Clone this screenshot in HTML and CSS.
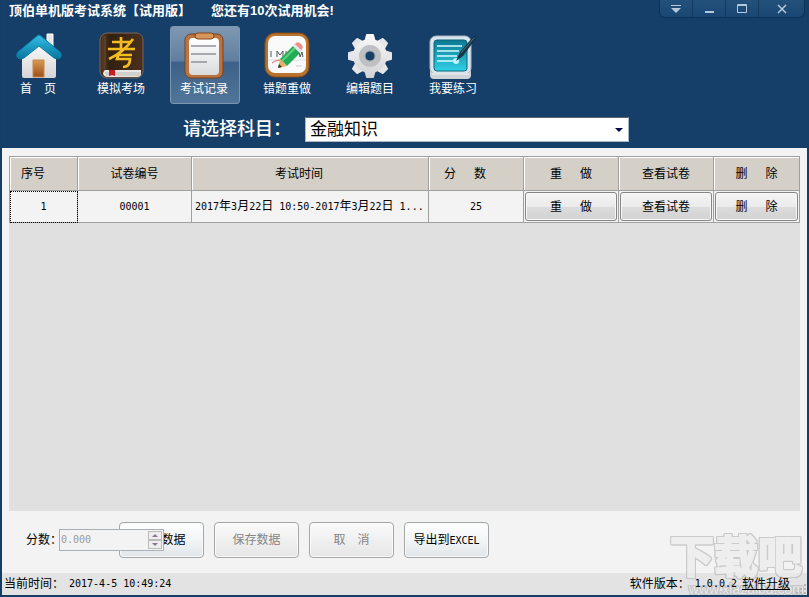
FILE: index.html
```html
<!DOCTYPE html>
<html lang="zh-CN">
<head>
    <meta charset="UTF-8">
    <meta name="viewport" content="width=device-width, initial-scale=1.0">
    <title>顶伯单机版考试系统</title>
    <link rel="stylesheet" href="styles.css">
</head>
<body>
    <header class="header">
        <div class="titlebar">
            <h1 class="title">顶伯单机版考试系统【试用版】</h1>
            <span class="trial">您还有10次试用机会!</span>
            <div class="window-buttons">
                <button class="window-button" aria-label="菜单">
                    <svg width="10" height="10" viewBox="0 0 10 10"><path d="M0 1.5h10" stroke="#b5c9dc"/><path d="M0 4h10L5 9z" fill="#b5c9dc"/></svg>
                </button>
                <button class="window-button" aria-label="最小化">
                    <svg width="10" height="10" viewBox="0 0 10 10"><path d="M1 7h9v2H1z" fill="#b5c9dc"/></svg>
                </button>
                <button class="window-button" aria-label="最大化">
                    <svg width="10" height="10" viewBox="0 0 10 10"><path d="M.5 .5h9v8h-9zM0 1.5h10" fill="none" stroke="#b5c9dc"/></svg>
                </button>
                <button class="window-button close" aria-label="关闭">
                    <svg width="10" height="10" viewBox="0 0 10 10"><path d="M1 1l8 8M9 1L1 9" stroke="#b5c9dc" stroke-width="1.5"/></svg>
                </button>
            </div>
        </div>

        <nav class="toolbar">
            <button class="tool">
                <svg class="tool-icon" viewBox="0 0 48 48">
                    <defs>
                        <linearGradient id="roof" x2="0" y2="1"><stop stop-color="#35bde8"/><stop offset="1" stop-color="#08779f"/></linearGradient>
                        <linearGradient id="wall" x2="0" y2="1"><stop stop-color="#fff"/><stop offset="1" stop-color="#d5d5d7"/></linearGradient>
                        <linearGradient id="door" x2="0" y2="1"><stop stop-color="#d99a52"/><stop offset="1" stop-color="#9c4f18"/></linearGradient>
                    </defs>
                    <path d="M33 2h6v16h-6z" fill="#e5e6e8" stroke="#fff"/>
                    <path d="M8 22L25 7l17 15v22q0 2-2 2H10q-2 0-2-2z" fill="url(#wall)"/>
                    <path d="M23 4Q25 2 27 4L46 20q2 2 1 5-2 3-7 1L25 14 10 26q-5 2-7-1-1-3 1-5z" fill="url(#roof)" stroke="#087da5"/>
                    <path d="M19 28h11v17H19z" fill="url(#door)" stroke="#c8864b"/>
                </svg>
                <span>首　页</span>
            </button>
            <button class="tool">
                <svg class="tool-icon" viewBox="0 0 48 48">
                    <defs><linearGradient id="cover"><stop stop-color="#5a3b24"/><stop offset=".2" stop-color="#322010"/><stop offset="1" stop-color="#49301c"/></linearGradient></defs>
                    <rect x="3" y="1" width="43" height="45" rx="7" fill="#4b2d1d" stroke="#77675c"/>
                    <path d="M7 38h37v5q-1 2-4 2H11q-5 0-5-4z" fill="#e9e7e2"/>
                    <path d="M8 41h36M9 43h34" stroke="#aaa79f" stroke-width=".7"/>
                    <path d="M5 38V7q0-5 5-5h30q5 0 5 5v29q0 2-3 2H9q-3 0-3 4z" fill="url(#cover)"/>
                    <path d="M8 4v33" stroke="#6d4932"/>
                    <path d="M12 38h6v6l-3-1-3 1z" fill="#c51f22"/>
                    <path d="M15 10h18M24 5v12M11 17h27M36 7Q27 20 12 27M22 21l-2 6h13q0 8-7 8M22 23h13" fill="none" stroke="#f5bd20" stroke-width="2.7"/>
                </svg>
                <span>模拟考场</span>
            </button>
            <button class="tool active">
                <svg class="tool-icon" viewBox="0 0 48 48">
                    <defs><linearGradient id="paper" x2="0" y2="1"><stop stop-color="#fff"/><stop offset="1" stop-color="#dadbdd"/></linearGradient></defs>
                    <rect x="5" y="2" width="38" height="44" rx="6" fill="#b87442" stroke="#7d401b"/>
                    <rect x="9" y="6" width="30" height="37" rx="4" fill="url(#paper)"/>
                    <rect x="15" y="1" width="19" height="6" rx="3" fill="#d89558" stroke="#824419"/>
                    <path d="M11 14h25M11 22h25M11 30h16" stroke="#909296" stroke-width="1.7"/>
                </svg>
                <span>考试记录</span>
            </button>
            <button class="tool">
                <svg class="tool-icon" viewBox="0 0 48 48">
                    <rect x="2" y="1" width="44" height="44" rx="10" fill="#b8732f" stroke="#8a4c18"/>
                    <rect x="5" y="4" width="38" height="37" rx="7" fill="#fafafa"/>
                    <path d="M8 19v6M14 25v-6l3 4 3-4v6M23 19v6M36 19l1 6 2-5 1 5" fill="none" stroke="#555"/>
                    <path d="M5 28h38" stroke="#cfcfcf" stroke-width=".6"/>
                    <path d="M9 31q5-4 13-3" fill="none" stroke="#e06057"/>
                    <path d="M33 34h6" stroke="#ccc"/>
                    <path d="M17 27L30 14l7 7-13 13z" fill="#20ad56"/>
                    <path d="M19 29L32 16" stroke="#65ce83" stroke-width="2"/>
                    <path d="M31 13l2-2q2-2 5 1t1 5l-2 3z" fill="#ef8d86"/>
                    <path d="M30 14l2-2 7 7-2 2z" fill="#e5e6e9"/>
                    <path d="M17 27l7 7-9 2z" fill="#e7b16b"/><path d="M16 32l3 3-4 1z" fill="#333"/>
                </svg>
                <span>错题重做</span>
            </button>
            <button class="tool">
                <svg class="tool-icon" viewBox="0 0 48 48">
                    <defs>
                        <linearGradient id="gear" gradientUnits="userSpaceOnUse" x1="0" y1="2" x2="0" y2="46"><stop stop-color="#fafafa"/><stop offset="1" stop-color="#d2d2d4"/></linearGradient>
                        <path id="teeth" d="M18 10l2-7q0-1 1-1h6q1 0 1 1l2 7v28l-2 7q0 1-1 1h-6q-1 0-1-1l-2-7z"/>
                    </defs>
                    <g fill="#e6e6e8">
                        <use href="#teeth" fill="url(#gear)"/>
                        <use href="#teeth" transform="rotate(45 24 24)"/>
                        <use href="#teeth" transform="rotate(90 24 24)"/>
                        <use href="#teeth" transform="rotate(135 24 24)"/>
                    </g>
                    <circle cx="24" cy="24" r="17" fill="url(#gear)"/>
                    <circle cx="24" cy="24" r="11" fill="#bfc0c4"/>
                    <circle cx="24" cy="24" r="5" fill="#154069" stroke="#9da2aa"/>
                </svg>
                <span>编辑题目</span>
            </button>
            <button class="tool">
                <svg class="tool-icon" viewBox="0 0 48 48">
                    <defs><linearGradient id="screen" x2="0" y2="1"><stop stop-color="#0b7992"/><stop offset="1" stop-color="#2fd0e6"/></linearGradient></defs>
                    <path d="M1 32v11q0 4 4 4h33q4 0 4-4V32z" fill="#cfd3d9"/>
                    <rect x="1" y="4" width="41" height="38" rx="6" fill="#dae4eb" stroke="#a5b6c4"/>
                    <path d="M3 42h37" stroke="#fff"/>
                    <rect x="5" y="8" width="33" height="31" rx="3" fill="url(#screen)" stroke="#06677e"/>
                    <path d="M8 14h25M8 19h22M8 24h20M8 29h17" stroke="#d8fbff" stroke-width="1.6"/>
                    <circle cx="27" cy="29" r="3" fill="#b9f7ff"/>
                    <path d="M47 3q1 2-2 6L34 24l-7 5 4-9L43 6z" fill="#173447"/><path d="M32 21L45 6" stroke="#577386"/>
                </svg>
                <span>我要练习</span>
            </button>
        </nav>

        <div class="subject">
            <label class="subject-label" for="subject">请选择科目：</label>
            <div class="select-box">
                <select id="subject" class="subject-select">
                    <option>金融知识</option>
                </select>
                <svg class="select-arrow" width="8" height="4" viewBox="0 0 8 4"><path d="M0 0h8L4 4z" fill="#00004c"/></svg>
            </div>
        </div>
    </header>

    <main class="content">
        <div class="grid">
            <table class="records">
                <colgroup>
                    <col class="col-index">
                    <col class="col-code">
                    <col>
                    <col class="col-action">
                    <col class="col-action">
                    <col class="col-action">
                    <col class="col-delete">
                </colgroup>
                <thead>
                    <tr>
                        <th class="left">序号</th>
                        <th>试卷编号</th>
                        <th class="time-head">考试时间</th>
                        <th class="score-head">分<span class="spread">数</span></th>
                        <th>重<span class="spread">做</span></th>
                        <th>查看试卷</th>
                        <th>删<span class="spread">除</span></th>
                    </tr>
                </thead>
                <tbody>
                    <tr>
                        <td class="num focused">1</td>
                        <td class="num">00001</td>
                        <td class="time"><span class="num">2017</span>年<span class="num">3</span>月<span class="num">22</span>日<span class="num"> 10:50-2017</span>年<span class="num">3</span>月<span class="num">22</span>日<span class="num"> 1...</span></td>
                        <td class="num">25</td>
                        <td class="cell"><button class="row-button">重<span class="spread">做</span></button></td>
                        <td class="cell"><button class="row-button">查看试卷</button></td>
                        <td class="cell"><button class="row-button">删<span class="spread">除</span></button></td>
                    </tr>
                </tbody>
            </table>
        </div>

        <div class="actions">
            <label for="score">分数：</label>
            <div class="spinner">
                <input id="score" class="spinner-input num" type="text" value="0.000" disabled>
                <div class="spinner-buttons">
                    <button class="spin" aria-label="增加" disabled><svg width="6" height="3" viewBox="0 0 6 3"><path d="M0 3h6L3 0z" fill="#8b7795"/></svg></button>
                    <button class="spin" aria-label="减少" disabled><svg width="6" height="3" viewBox="0 0 6 3"><path d="M0 0h6L3 3z" fill="#8b7795"/></svg></button>
                </div>
            </div>
            <button class="action">修改数据</button>
            <button class="action" disabled>保存数据</button>
            <button class="action" disabled>取　消</button>
            <button class="action">导出到<span class="num">EXCEL</span></button>
        </div>
    </main>

    <footer class="status">
        <span>当前时间：</span>
        <span class="num clock">2017-4-5 10:49:24</span>
        <span class="version">软件版本：</span>
        <span class="num version-number">1.0.0.2</span>
        <a class="upgrade" href="#">软件升级</a>
        <svg class="grip" width="12" height="12" viewBox="0 0 12 12"><path d="M9 1h2v2H9zM5 5h2v2H5zM9 5h2v2H9zM1 9h2v2H1zM5 9h2v2H5zM9 9h2v2H9z" fill="#b5b5b5"/></svg>
    </footer>

    <div class="watermark" aria-hidden="true">
        <span class="watermark-name">下载吧</span>
        <span class="watermark-site">www.xiazaiba.com</span>
    </div>
</body>
</html>
```
FILE: styles.css
```css
* {
    box-sizing: border-box;
}
body {
    margin: 0;
    min-height: 100vh;
    display: flex;
    flex-direction: column;
    border: 2px solid #143e66;
    border-top: none;
    background-color: #f3f3f3;
    color: #000;
    font-family: "Liberation Sans", "Noto Sans CJK SC", sans-serif;
    font-size: 12px;
    line-height: 16px;
    position: relative;
}
button, input, select {
    font: inherit;
    color: inherit;
    margin: 0;
    padding: 0;
}
.num {
    font-family: "DejaVu Sans Mono", monospace;
    font-size: 10px;
}

/* header */
.header {
    background-color: #153f69;
    color: white;
    padding-bottom: 6px;
}
.titlebar {
    display: flex;
    height: 26px;
    padding: 0 2px 0 7px;
}
.title, .trial {
    margin: 0;
    padding-top: 3px;
    font-size: 13px;
    font-weight: bold;
}
.trial {
    margin-left: 20px;
}
.window-buttons {
    display: flex;
    height: 18px;
    margin-left: auto;
    border: 1px solid #0e3155;
    border-top: none;
    border-radius: 0 0 6px 6px;
    background-image: linear-gradient(#24507c, #1a4673);
}
.window-button {
    width: 33px;
    border: none;
    border-right: 1px solid #143a61;
    background: none;
    display: flex;
    align-items: center;
    justify-content: center;
}
.window-button.close {
    width: 45px;
    border-right: none;
}
.toolbar {
    display: flex;
    gap: 13px;
    padding-left: 2px;
}
.tool {
    width: 70px;
    height: 78px;
    border: 1px solid transparent;
    border-radius: 3px;
    background: none;
    color: white;
    display: flex;
    flex-direction: column;
    align-items: center;
    padding: 5px 2px 0 0;
    gap: 1px;
}
.tool.active {
    border-color: #7d96b0;
    background-image: linear-gradient(#7f98b3, #5f7e9f 45%, #3c6087 46%, #527699);
}
.tool-icon {
    width: 48px;
    height: 48px;
}
.subject {
    display: flex;
    align-items: center;
    padding: 13px 178px 0 181px;
}
.subject-label {
    width: 122px;
    font-size: 18px;
    line-height: 25px;
    font-weight: 500;
    white-space: nowrap;
}
.select-box {
    flex: 1;
    position: relative;
}
.subject-select {
    width: 100%;
    height: 25px;
    padding-left: 4px;
    appearance: none;
    border: 1px solid #a9b8c6;
    border-top-color: #5c6670;
    border-radius: 0;
    background-color: white;
    color: black;
    font-size: 17px;
    line-height: 23px;
    display: block;
}
.select-arrow {
    position: absolute;
    right: 6px;
    top: 11px;
    pointer-events: none;
}

/* records */
.content {
    flex: 1;
    display: flex;
    flex-direction: column;
    padding: 8px 7px 0;
}
.grid {
    flex: 1;
    background-color: #e0e0e0;
}
.records {
    width: 100%;
    table-layout: fixed;
    border-collapse: collapse;
    text-align: center;
}
.col-index {
    width: 68px;
}
.col-code {
    width: 114px;
}
.col-action {
    width: 95px;
}
.col-delete {
    width: 86px;
}
.records th, .records td {
    border: 1px solid #a0a0a0;
    padding: 0;
}
.records th {
    height: 34px;
    background-color: #d4d0c8;
    font-weight: normal;
    box-shadow: inset 1px 1px white;
}
.records th.left {
    text-align: left;
    padding-left: 11px;
}
.records th.time-head, .records th.score-head {
    padding-right: 22px;
}
.records td {
    height: 32px;
    background-color: #f3f3f3;
}
.records td.focused {
    outline: 1px dotted black;
    outline-offset: -1px;
}
.records td.time {
    padding-left: 3px;
    text-align: left;
    white-space: nowrap;
    overflow: hidden;
}
.spread {
    margin-left: 18px;
}
.records td.cell {
    padding: 0 1px;
}
.row-button {
    width: 100%;
    height: 29px;
    display: block;
    border: 1px solid #858585;
    border-radius: 3px;
    background-image: linear-gradient(#f4f4f4, #ebebeb 50%, #dcdcdc 51%, #d2d2d2);
    box-shadow: inset 0 0 0 1px #f8f8f8;
}

/* bottom buttons */
.actions {
    display: flex;
    align-items: center;
    padding: 11px 0 15px 17px;
    gap: 10px;
}
.actions label {
    width: 33px;
    margin-right: -10px;
    white-space: nowrap;
}
.spinner {
    width: 105px;
    height: 22px;
    margin-right: -55px;
    position: relative;
    z-index: 1;
    display: flex;
    border: 1px solid #aaafb5;
    background-color: #f3f3f3;
}
.spinner-input {
    flex: 1;
    min-width: 0;
    padding-left: 1px;
    border: none;
    background: none;
    color: #9a9a9a;
}
.spinner-buttons {
    width: 15px;
    display: flex;
    flex-direction: column;
    padding: 1px 1px 1px 0;
}
.spin {
    flex: 1;
    border: 1px solid #bcbcbc;
    background-color: #eee;
    display: flex;
    align-items: center;
    justify-content: center;
}
.action {
    width: 85px;
    height: 36px;
    border: 1px solid #a3a7aa;
    border-radius: 4px;
    background-image: linear-gradient(#fff, #f3f5f6 50%, #e0e5e8);
    box-shadow: inset 0 0 0 1px #fafafa;
}
.action:disabled {
    color: #858585;
    background-image: linear-gradient(#fafafa, #e6e6e6);
}

/* status bar */
.status {
    display: flex;
    align-items: center;
    height: 22px;
    padding-left: 2px;
    background-color: #e3e3e3;
}
.status > * {
    position: relative;
    z-index: 1;
}
.status .clock {
    margin-left: 5px;
}
.status .version {
    margin-left: auto;
}
.status .version-number {
    margin: 0 5px;
}
.upgrade {
    color: black;
}
.grip {
    align-self: flex-end;
    margin-left: 5px;
}

.watermark {
    position: absolute;
    right: 3px;
    bottom: 0;
    width: 134px;
    display: flex;
    flex-direction: column;
    opacity: 0.7;
    pointer-events: none;
    color: #ececec;
    filter: drop-shadow(1px 0 #bbb) drop-shadow(-1px 0 #bbb) drop-shadow(0 1px #bbb) drop-shadow(0 -1px #bbb);
}
.watermark-name {
    font-size: 44px;
    line-height: 50px;
    font-weight: bold;
    -webkit-text-stroke: 2px #ececec;
}
.watermark-site {
    font-size: 14px;
    line-height: 12px;
    text-align: right;
}
```
